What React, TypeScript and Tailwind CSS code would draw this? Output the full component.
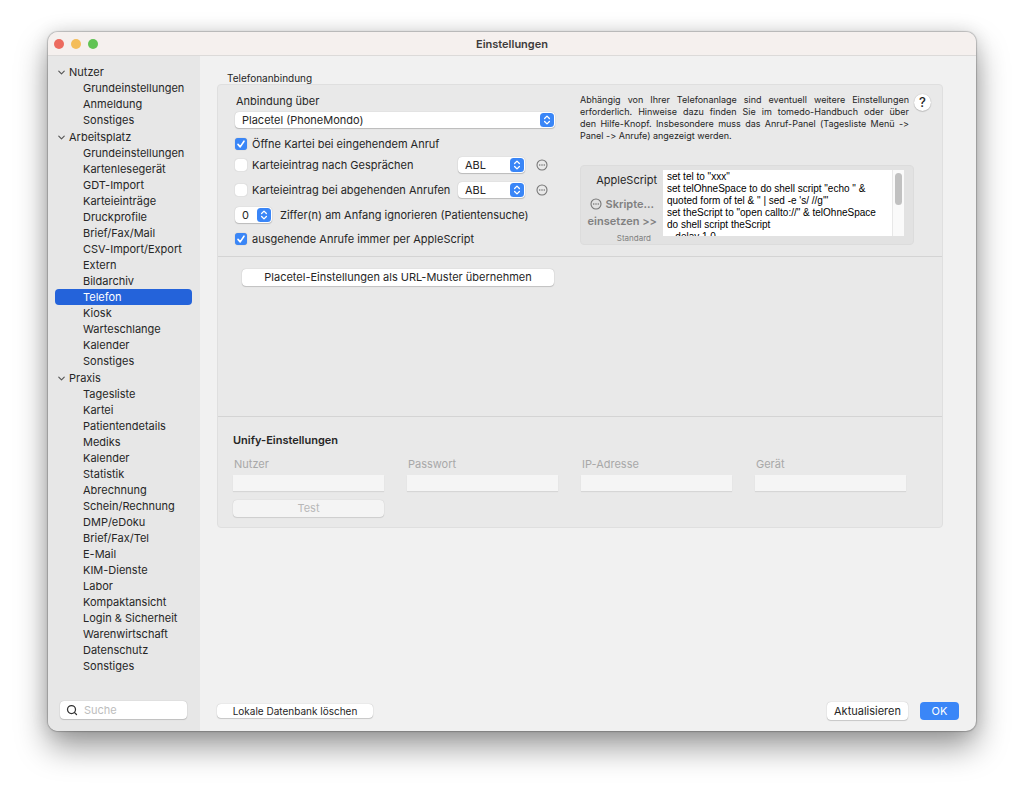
import { ChevronDown, Search } from 'lucide-react';

const groups = [
  { title: 'Nutzer', items: ['Grundeinstellungen', 'Anmeldung', 'Sonstiges'] },
  {
    title: 'Arbeitsplatz',
    items: [
      'Grundeinstellungen',
      'Kartenlesegerät',
      'GDT-Import',
      'Karteieinträge',
      'Druckprofile',
      'Brief/Fax/Mail',
      'CSV-Import/Export',
      'Extern',
      'Bildarchiv',
      'Telefon',
      'Kiosk',
      'Warteschlange',
      'Kalender',
      'Sonstiges',
    ],
  },
  {
    title: 'Praxis',
    items: [
      'Tagesliste',
      'Kartei',
      'Patientendetails',
      'Mediks',
      'Kalender',
      'Statistik',
      'Abrechnung',
      'Schein/Rechnung',
      'DMP/eDoku',
      'Brief/Fax/Tel',
      'E-Mail',
      'KIM-Dienste',
      'Labor',
      'Kompaktansicht',
      'Login & Sicherheit',
      'Warenwirtschaft',
      'Datenschutz',
      'Sonstiges',
    ],
  },
];

const script = `set tel to "xxx"
set telOhneSpace to do shell script "echo " &
quoted form of tel & " | sed -e 's/ //g'"
set theScript to "open callto://" & telOhneSpace
do shell script theScript
   delay 1.0`;

const unifyFields = ['Nutzer', 'Passwort', 'IP-Adresse', 'Gerät'];

function PopUp({ id, label, value, className }: { id: string; label?: string; value: string; className: string }) {
  return (
    <div className={`relative h-4 ${className}`}>
      <select
        id={id}
        aria-label={label}
        defaultValue={value}
        className="block h-4 w-full appearance-none rounded-[4px] bg-white pl-[7px] leading-4 shadow-[0_0_1px_rgba(0,0,0,0.25),0_1px_1px_rgba(0,0,0,0.18)]"
      >
        <option>{value}</option>
      </select>
      <svg viewBox="0 0 14 14" className="pointer-events-none absolute right-px top-px size-[14px]">
        <rect width="14" height="14" rx="3.5" fill="#3a86f7" />
        <path d="M4.6 5.5 7 3.1l2.4 2.4M4.6 8.5 7 10.9l2.4-2.4" fill="none" stroke="#fff" strokeWidth="1.3" strokeLinecap="round" strokeLinejoin="round" />
      </svg>
    </div>
  );
}

function CheckBox({ label, checked = false }: { label: string; checked?: boolean }) {
  return (
    <label className="flex h-4 items-center gap-[5px] whitespace-nowrap">
      <span className="relative size-3">
        <input
          type="checkbox"
          defaultChecked={checked}
          className="peer block size-3 appearance-none rounded-[3px] bg-white shadow-[0_0_1px_rgba(0,0,0,0.3)] checked:bg-[#3a86f7]"
        />
        <svg viewBox="0 0 12 12" className="pointer-events-none absolute inset-0 hidden size-3 peer-checked:block">
          <path d="M3 6.4 5.2 8.9 9 3.2" fill="none" stroke="#fff" strokeWidth="1.6" strokeLinecap="round" strokeLinejoin="round" />
        </svg>
      </span>
      {label}
    </label>
  );
}

function Dots() {
  return (
    <svg viewBox="0 0 12 12" className="size-3">
      <circle cx="6" cy="6" r="5" fill="none" stroke="#777" strokeWidth="1.1" />
      <circle cx="3.7" cy="6" r=".8" fill="#777" />
      <circle cx="6" cy="6" r=".8" fill="#777" />
      <circle cx="8.3" cy="6" r=".8" fill="#777" />
    </svg>
  );
}

function Sidebar() {
  return (
    <aside className="flex w-[152px] shrink-0 flex-col bg-[#e7e7e7] pb-3 pl-[7px] pr-2 pt-2">
      <nav className="space-y-px">
        {groups.map((group) => (
          <div key={group.title}>
            <h2 className="flex h-4 items-center gap-[2px] pl-px">
              <ChevronDown className="mt-px size-[11px] text-[#555]" strokeWidth={2.5} />
              {group.title}
            </h2>
            <ul>
              {group.items.map((item) => (
                <li key={item}>
                  <a
                    href="#"
                    className={`block h-4 rounded-[4px] pl-7 leading-4 ${item === 'Telefon' ? 'bg-[#2463da] text-white' : ''}`}
                  >
                    {item}
                  </a>
                </li>
              ))}
            </ul>
          </div>
        ))}
      </nav>
      <label className="mx-[5px] mt-auto flex h-[18px] items-center gap-[6px] rounded-[4px] bg-white px-[6px] shadow-[0_0_1px_rgba(0,0,0,0.3),0_1px_1px_rgba(0,0,0,0.15)]">
        <Search className="size-3 shrink-0 text-[#333]" strokeWidth={2.5} />
        <input type="text" aria-label="Suche" placeholder="Suche" className="w-full min-w-0 placeholder:text-[#bdbdbd]" />
      </label>
    </aside>
  );
}

const pushButton =
  'rounded-[4px] bg-white text-center shadow-[0_0_1px_rgba(0,0,0,0.3),0_1px_1px_rgba(0,0,0,0.15)]';

export default function App() {
  return (
    <div className="flex min-h-screen flex-col bg-white px-12 pb-[63px] pt-8 font-['Inter',sans-serif] text-[11px] leading-4 text-[#262626]">
      <div className="flex flex-1 flex-col overflow-hidden rounded-[10px] bg-[#f1f1f1] shadow-[0_0_1px_1px_rgba(0,0,0,0.2),0_16px_32px_rgba(0,0,0,0.4),0_0_18px_rgba(0,0,0,0.12)]">
        {/* Title bar */}
        <header className="relative flex h-6 items-center justify-center border-b border-[#dcdad9] bg-[#f5f0ee]">
          <div className="absolute left-[6px] flex gap-[7px]">
            <button aria-label="Schließen" className="size-[10px] rounded-full bg-[#ec6a5e]" />
            <button aria-label="Minimieren" className="size-[10px] rounded-full bg-[#f4bd5a]" />
            <button aria-label="Zoomen" className="size-[10px] rounded-full bg-[#61c354]" />
          </div>
          <h1 className="font-semibold text-[#3d3b3b]">Einstellungen</h1>
        </header>

        <div className="flex flex-1">
          <Sidebar />

          <main className="flex min-w-0 flex-1 flex-col px-[17px] pb-[11px] pt-[14px]">
            <h2 className="h-[14px] pl-[10px] text-[10px] leading-4">Telefonanbindung</h2>

            <div className="mr-4 rounded-[4px] border border-[#dfdfdf] bg-[#e9e9e9]">
              {/* Connection */}
              <section className="flex gap-[25px] border-b border-[#d4d4d4] pb-[9px] pl-[17px] pr-[11px] pt-2">
                <div className="w-[320px] shrink-0">
                  <label htmlFor="anbindung" className="block pl-px">
                    Anbindung über
                  </label>
                  <PopUp id="anbindung" value="Placetel (PhoneMondo)" className="mt-[3px] w-full" />
                  <div className="mt-2">
                    <CheckBox label="Öffne Kartei bei eingehendem Anruf" checked />
                  </div>
                  <div className="mt-[5px] flex items-center justify-between pr-[7px]">
                    <CheckBox label="Karteieintrag nach Gesprächen" />
                    <div className="flex items-center gap-[11px]">
                      <PopUp id="gespraech" label="Eintragstyp Gespräche" value="ABL" className="w-[67px]" />
                      <button aria-label="Platzhalter Gespräche">
                        <Dots />
                      </button>
                    </div>
                  </div>
                  <div className="mt-[9px] flex items-center justify-between pr-[7px]">
                    <CheckBox label="Karteieintrag bei abgehenden Anrufen" />
                    <div className="flex items-center gap-[11px]">
                      <PopUp id="abgehend" label="Eintragstyp abgehende Anrufe" value="ABL" className="w-[67px]" />
                      <button aria-label="Platzhalter abgehende Anrufe">
                        <Dots />
                      </button>
                    </div>
                  </div>
                  <div className="mt-[9px] flex items-center gap-2">
                    <PopUp id="ziffern" value="0" className="w-[37px]" />
                    <label htmlFor="ziffern">Ziffer(n) am Anfang ignorieren (Patientensuche)</label>
                  </div>
                  <div className="mt-2">
                    <CheckBox label="ausgehende Anrufe immer per AppleScript" checked />
                  </div>
                </div>

                <div className="min-w-0 flex-1">
                  <div className="flex items-start gap-[5px]">
                    <p className="flex-1 pt-px text-justify text-[9px] leading-3 [font-variant-ligatures:none]">
                      Abhängig von Ihrer Telefonanlage sind eventuell weitere Einstellungen erforderlich. Hinweise dazu
                      finden Sie im tomedo-Handbuch oder über <span className="whitespace-nowrap">den Hilfe-Knopf.</span>{' '}
                      Insbesondere muss das Anruf-Panel (Tagesliste Menü <span className="whitespace-nowrap">-&gt;</span>{' '}
                      Panel <span className="whitespace-nowrap">-&gt;</span> Anrufe) angezeigt werden.
                    </p>
                    <button
                      aria-label="Hilfe"
                      className="mt-px size-[17px] rounded-full bg-white text-[13px] font-medium leading-[17px] shadow-[0_0_1px_rgba(0,0,0,0.3),0_1px_1px_rgba(0,0,0,0.15)]"
                    >
                      ?
                    </button>
                  </div>

                  <div className="mr-[17px] mt-[23px] flex h-[80px] rounded-[4px] border border-[#dcdcdc] bg-[#e2e2e2] pr-[9px] pt-1">
                    <div className="flex w-[82px] shrink-0 flex-col items-end pr-[6px] pt-[2px]">
                      <label htmlFor="script">AppleScript</label>
                      <button className="mt-2 flex items-center gap-1 pr-[3px] font-semibold text-[#808080]">
                        <Dots />
                        Skripte...
                      </button>
                      <button className="mt-px font-semibold text-[#808080]">einsetzen &gt;&gt;</button>
                      <button className="mt-[3px] pr-[6px] text-[8px] leading-3 text-[#808080]">Standard</button>
                    </div>
                    <div className="flex h-[66px] min-w-0 flex-1 bg-white">
                      <textarea
                        id="script"
                        wrap="off"
                        defaultValue={script}
                        className="block h-full min-w-0 flex-1 resize-none overflow-hidden pl-1 pt-px font-['Liberation_Sans',Arial,sans-serif] text-[10px] leading-3 text-black"
                      />
                      <div className="w-3 border-l border-[#e8e8e8] bg-[#fafafa] pl-[2px] pt-[3px]">
                        <div className="h-8 w-[7px] rounded-full bg-[#c1c1c1]" />
                      </div>
                    </div>
                  </div>
                </div>
              </section>

              {/* Placetel */}
              <section className="h-[160px] border-b border-[#d4d4d4] pl-6 pt-3">
                <button className={`${pushButton} h-[17px] w-[312px] leading-[17px]`}>
                  Placetel-Einstellungen als URL-Muster übernehmen
                </button>
              </section>

              {/* Unify */}
              <section className="pb-[10px] pl-[15px] pr-9 pt-[15px]">
                <h3 className="font-semibold">Unify-Einstellungen</h3>
                <div className="mt-2 grid grid-cols-4 gap-x-[23px] text-[#a8a8a8]">
                  {unifyFields.map((field) => (
                    <label key={field} className="block">
                      <span className="block pl-px">{field}</span>
                      <input
                        type={field === 'Passwort' ? 'password' : 'text'}
                        disabled
                        className="mt-[3px] block h-4 w-full bg-[#f5f5f5] shadow-[0_1px_1px_rgba(0,0,0,0.08)]"
                      />
                    </label>
                  ))}
                  <button
                    disabled
                    className="mt-[9px] h-[17px] rounded-[4px] bg-[#f4f4f4] leading-[17px] text-[#b8b8b8] shadow-[0_0_1px_rgba(0,0,0,0.2),0_1px_1px_rgba(0,0,0,0.1)]"
                  >
                    Test
                  </button>
                </div>
              </section>
            </div>

            {/* Footer */}
            <footer className="mt-auto flex items-center">
              <button className={`${pushButton} h-[14px] w-[156px] text-[10px] leading-[14px]`}>
                Lokale Datenbank löschen
              </button>
              <button className={`${pushButton} ml-auto h-[18px] px-[7px] leading-[18px]`}>Aktualisieren</button>
              <button className="ml-3 h-[18px] w-[39px] rounded-[4px] bg-[#3a86f7] leading-[18px] text-white">OK</button>
            </footer>
          </main>
        </div>
      </div>
    </div>
  );
}
